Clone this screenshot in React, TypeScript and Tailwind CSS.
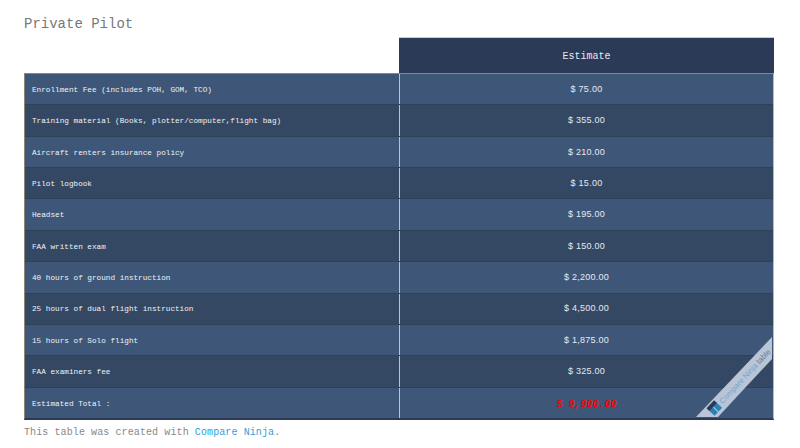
const rows = [
	['Enrollment Fee (includes POH, GOM, TCO)', '$ 75.00'],
	['Training material (Books, plotter/computer,flight bag)', '$ 355.00'],
	['Aircraft renters insurance policy', '$ 210.00'],
	['Pilot logbook', '$ 15.00'],
	['Headset', '$ 195.00'],
	['FAA written exam', '$ 150.00'],
	['40 hours of ground instruction', '$ 2,200.00'],
	['25 hours of dual flight instruction', '$ 4,500.00'],
	['15 hours of Solo flight', '$ 1,875.00'],
	['FAA examiners fee', '$ 325.00'],
]

function Ribbon() {
	return (
		<svg className="absolute bottom-0 right-0" width="77" height="81" viewBox="0 0 77 81">
			<polygon points="76,0 76,22 22,80 0,80" fill="#b9c5d6" />
			<g transform="translate(19 71) rotate(-47)">
				<rect x="-6" y="-5" width="5" height="10" fill="#2b80b8" />
				<rect x="0" y="-5" width="5" height="10" fill="#2b80b8" />
				<rect x="-6" y="-6" width="11" height="4" fill="#2b3a57" />
				<text x="8" y="3" fontFamily="Liberation Sans, sans-serif" fontSize="7.8" fill="#6fa6d2">
					Compare Ninja <tspan fill="#6f7a88">table</tspan>
				</text>
			</g>
		</svg>
	)
}

export default function App() {
	return (
		<div className="h-[448px] w-[800px] overflow-hidden bg-white px-6 pt-[16px] font-['Liberation_Mono',monospace]">
			<h1 className="text-[14px] leading-[16px] text-[#777]">Private Pilot</h1>
			<div className="ml-[375px] mt-[5px] flex h-[36px] w-[375px] items-center justify-center border-t border-[#c8ccd4] bg-[#2b3a57] pt-[2px] text-[10px] text-[#e6e9ee]">
				Estimate
			</div>
			<div className="relative flex h-[347px] w-[750px] flex-col border-t border-l border-b-2 border-t-[#9a8470] border-l-[#8b8478] border-b-[#2b3a57] border-r border-r-[#aebbd0]">
				{rows.map(([label, price], i) => (
					<div
						key={label}
						className={`grid flex-1 grid-cols-[375px_1fr] border-b border-[#2f4059] ${i % 2 === 0 ? 'bg-[#3e5779]' : 'bg-[#344864]'}`}
					>
						<div className="flex items-center border-r border-[#b8c4d4] pl-[7px] pt-[3px] text-[7.7px] text-[#f0f2f5]">{label}</div>
						<div className="flex items-center justify-center pt-[1px] font-['Liberation_Sans',sans-serif] text-[9px] tracking-[0.25px] text-[#e6e9ee]">{price}</div>
					</div>
				))}
				<div className="grid flex-1 grid-cols-[375px_1fr] bg-[#3e5779]">
					<div className="flex items-center border-r border-[#b8c4d4] pl-[7px] pt-[3px] text-[7.7px] text-[#f0f2f5]">Estimated Total :</div>
					<div className="flex items-center justify-center pt-[3px] text-[10px] font-bold italic text-[#ff0000]">$ 9,900.00</div>
				</div>
				<Ribbon />
			</div>
			<p className="mt-[7px] text-[10px] leading-[12px] tracking-[0.1px] text-[#888]">
				This table was created with <span className="text-[#2f9fdc]">Compare Ninja</span>.
			</p>
		</div>
	)
}
